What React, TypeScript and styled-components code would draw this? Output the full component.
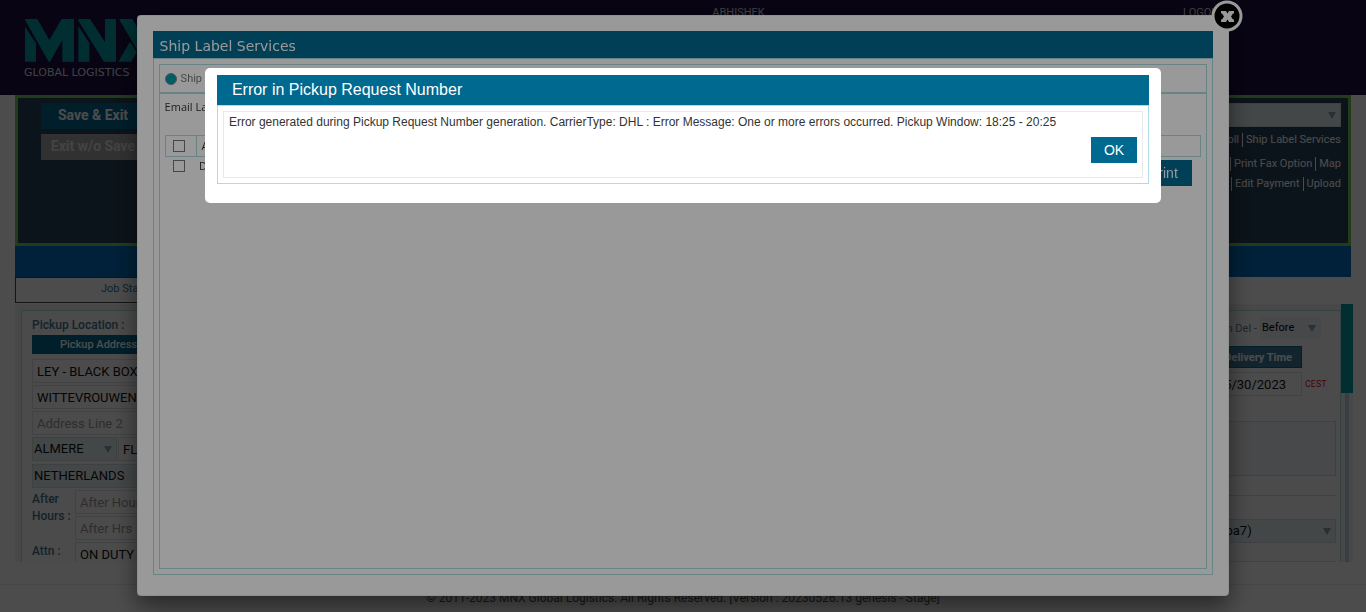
import React from "react";
import styled, { createGlobalStyle } from "styled-components";

const teal = "#006990";
const rule = "#aedce2";

const GlobalStyle = createGlobalStyle`
  *, *::before, *::after { box-sizing: border-box; }
  body { margin: 0; background: #fff; font-family: Roboto, sans-serif; font-size: 13px; color: #111; }
  button, input, select, textarea { font: inherit; color: inherit; margin: 0; border-radius: 0; }
  a { color: inherit; text-decoration: none; }
`;

const Page = styled.div`
  height: 100vh;
  overflow: hidden;
  display: flex;
  flex-direction: column;
  background: #fdfdfd;
`;

const Header = styled.header`
  flex: none;
  height: 95px;
  display: grid;
  grid-template-columns: 1fr auto 1fr;
  padding: 6px 141px 0 24px;
  background: #1c0f41;
  color: #d8d8d8;
  font-size: 11px;
  line-height: 14px;
`;

const Brand = styled.a`
  display: flex;
  flex-direction: column;
  gap: 5px;
  padding-top: 13px;
  font: 11px/12px "DejaVu Sans", sans-serif;
  svg { display: block; }
`;

const UserName = styled.span`
  padding-left: 228px;
`;

const LogOff = styled.a`
  justify-self: end;
`;

const Main = styled.main`
  flex: 1;
  min-height: 0;
  display: flex;
  flex-direction: column;
  margin: 0 15px;
`;

const ActionPanel = styled.section`
  flex: none;
  height: 151px;
  display: flex;
  justify-content: space-between;
  padding: 5px 7px 0 23px;
  border: 3px solid #73c85d;
  background: #28435a;
`;

const ActionList = styled.div`
  display: flex;
  flex-direction: column;
  gap: 5px;
  width: 104px;
`;

const ActionButton = styled.button<{ $muted?: boolean }>`
  height: 26px;
  padding: 0 0 2px;
  border: 0;
  background: ${(p) => (p.$muted ? "#a6a6a6" : teal)};
  color: ${(p) => (p.$muted ? "#e0e0e0" : "#fff")};
  font-size: 14px;
  font-weight: 700;
  white-space: nowrap;
`;

const LinkArea = styled.nav`
  width: 260px;
  color: #fff;
  font-size: 11px;
  line-height: 14px;
`;

const LinkRow = styled.div<{ $gap: number }>`
  display: flex;
  justify-content: flex-end;
  margin-top: ${(p) => p.$gap}px;
  a + a { margin-left: 3px; padding-left: 3px; border-left: 1px solid #fff; }
`;

const BlueBar = styled.div`
  flex: none;
  height: 31px;
  background: #006ebf;
`;

const JobRow = styled.div`
  flex: none;
  width: 600px;
  height: 26px;
  padding-left: 85px;
  border: 1px solid #444;
  color: #3b7191;
  font-size: 11px;
  line-height: 21px;
`;

const ScrollArea = styled.div`
  flex: none;
  height: 258px;
  display: flex;
  margin: 1px -2px 0 0;
  overflow: hidden;
  background: #f0f0f0;
`;

const FormPanel = styled.section`
  flex: 1;
  height: 400px;
  display: flex;
  justify-content: space-between;
  margin: 6px 0 0 6px;
  padding: 6px 4px 0 10px;
  border: 1px solid ${rule};
  background: #fbfbfb;
`;

const ScrollTrack = styled.div`
  width: 12px;
  display: flex;
  flex-direction: column;
  align-items: center;
`;

const Thumb = styled.div`
  width: 12px;
  height: 89px;
  background: #009ca6;
`;

const Track = styled.div`
  flex: 1;
  width: 4px;
  background: #b4d6e0;
`;

const Column = styled.div<{ $w: number }>`
  display: flex;
  flex-direction: column;
  gap: 2px;
  width: ${(p) => p.$w}px;
`;

const FieldLabel = styled.label`
  color: #44748f;
  font-size: 12px;
  font-weight: 500;
  line-height: 16px;
`;

const Line = styled.div`
  display: flex;
  align-items: flex-start;
  gap: 1px;
`;

const CityLine = styled(Line)`
  padding-bottom: 1px;
`;

const BarButton = styled.button`
  height: 19px;
  margin-bottom: 3px;
  padding: 0 0 0 28px;
  border: 0;
  background: ${teal};
  color: #fff;
  font-size: 11px;
  font-weight: 500;
  text-align: left;
`;

const TextField = styled.input`
  width: 100%;
  min-width: 0;
  height: 24px;
  padding: 0 4px;
  border: 1px solid #d8dde2;
  background: #fafafb;
  &::placeholder { color: #999; opacity: 1; }
`;

const SelectBox = styled.span<{ $w?: string; $h?: number; $bg?: string }>`
  display: grid;
  align-items: center;
  width: ${(p) => p.$w ?? "100%"};
  height: ${(p) => p.$h ?? 24}px;
  border: 1px solid ${(p) => p.$bg ?? "#d0d8dc"};
  background: ${(p) => p.$bg ?? "#e2edef"};
  select, svg { grid-area: 1 / 1; }
  select { width: 100%; height: 100%; padding: 0 1px 1px; border: 0; background: none; appearance: none; }
  svg { justify-self: end; margin-right: 4px; pointer-events: none; }
`;

const SideLabel = styled(FieldLabel)`
  flex: none;
  width: 42px;
  line-height: 17px;
  padding-top: 1px;
`;

const Stack = styled.div`
  flex: 1;
  display: flex;
  flex-direction: column;
  gap: 2px;
`;

const DeliveryColumn = styled.div`
  width: 117px;
  font-size: 13px;
`;

const WhenLine = styled.div`
  display: flex;
  align-items: center;
  gap: 5px;
  color: #5b86a0;
  font-size: 11px;
  label { width: 36px; text-align: right; white-space: nowrap; }
  select { color: #000; }
`;

const DeliveryButton = styled.button`
  display: block;
  width: 83px;
  height: 22px;
  margin: 7px 0 4px;
  padding: 0 9px 0 0;
  border: 1px solid ${teal};
  background: #3f7c9c;
  color: #fff;
  font-size: 11px;
  font-weight: 700;
  text-align: right;
  white-space: nowrap;
`;

const DateLine = styled.div`
  display: flex;
  align-items: center;
  gap: 3px;
  small { color: #f01414; font-size: 9px; }
  input { width: 83px; padding: 0 15px 0 0; text-align: right; }
`;

const Notes = styled.textarea`
  display: block;
  width: 100%;
  height: 55px;
  margin: 25px 0 19px;
  border: 1px solid #d0d8dc;
  background: #f2f4f8;
  resize: none;
`;

const Divider = styled.hr`
  margin: 0;
  border: 0;
  border-top: 1px solid #d8dde0;
`;

const Gap = styled.div`
  padding: 23px 0 18px;
`;

const Footer = styled.footer`
  flex: none;
  height: 28px;
  padding-top: 5px;
  border-top: 1px solid #ececec;
  color: #555;
  font-size: 12px;
  line-height: 16px;
  text-align: center;
`;

const Shade = styled.div<{ $level: number }>`
  position: fixed;
  inset: 0;
  background: rgba(0, 0, 0, ${(p) => p.$level});
`;

const LabelDialog = styled.div`
  position: fixed;
  top: 15px;
  bottom: 16px;
  left: 10%;
  width: 80%;
  display: flex;
  flex-direction: column;
  padding: 16px;
  border-radius: 4px;
  background: #fff;
  box-shadow: 0 10px 25px rgba(0, 0, 0, 0.5), inset 0 0 1px #555;
`;

const DialogTitle = styled.h2`
  flex: none;
  margin: 0;
  height: 27px;
  padding: 0 7px;
  background: ${teal};
  color: #fff;
  font: 400 14px/30px "DejaVu Sans", sans-serif;
`;

const Frame = styled.div`
  flex: 1;
  display: flex;
  margin-bottom: 5px;
  padding: 5px;
  border: 1px solid ${rule};
`;

const FrameInner = styled.div`
  flex: 1;
  border: 1px solid ${rule};
  color: #333;
  font: 11px/16px "Open Sans", sans-serif;
`;

const RadioLine = styled.label`
  display: flex;
  align-items: center;
  gap: 4px;
  height: 29px;
  padding-left: 5px;
  border-bottom: 2px solid ${rule};
  color: #777;
  font-family: Roboto, sans-serif;
  input { appearance: none; width: 12px; height: 12px; margin: 0; border: 1px solid #88a; border-radius: 50%; background: #009ca6; }
`;

const EmailLine = styled.p`
  margin: 0;
  padding: 5px;
  height: 41px;
`;

const LabelTable = styled.table`
  width: calc(100% - 10px);
  margin-left: 5px;
  border-collapse: collapse;
  th, td { height: 18px; padding: 0 5px; font-weight: 400; text-align: left; }
  th { height: 21px; border: 1px solid ${rule}; }
  td + td { padding-left: 3px; }
  th:first-child { width: 31px; padding: 0 7px; }
  td:first-child { padding: 0 8px; }
`;

const Tick = styled.input`
  appearance: none;
  display: block;
  width: 12px;
  height: 12px;
  border: 1px solid #777;
  background: #fff;
`;

const SolidButton = styled.button<{ $w: number }>`
  display: block;
  width: ${(p) => p.$w}px;
  height: 26px;
  padding: 0;
  border: 0;
  background: ${teal};
  color: #fff;
  font: 14px "Liberation Sans", sans-serif;
`;

const PrintLine = styled.div`
  display: flex;
  justify-content: flex-end;
  margin: -15px 14px 0 0;
`;

const CloseButton = styled.button`
  position: absolute;
  top: -15px;
  right: -14px;
  width: 32px;
  height: 32px;
  padding: 0;
  border: 0;
  background: none;
  svg { display: block; }
`;

const ErrorDialog = styled.div`
  position: fixed;
  top: 68px;
  left: 15%;
  width: 70%;
  padding: 7px 12px 19px;
  border-radius: 5px;
  background: #fff;
  font-family: "Liberation Sans", sans-serif;
`;

const ErrorTitle = styled.h2`
  margin: 0;
  padding: 0 15px;
  background: ${teal};
  color: #fff;
  font-size: 16px;
  font-weight: 400;
  line-height: 30px;
`;

const ErrorFrame = styled.div`
  padding: 5px;
  border: 1px solid ${rule};
`;

const ErrorBody = styled.div`
  display: flex;
  flex-direction: column;
  padding: 3px 5px 14px;
  border: 1px solid #eaeaea;
  color: #333;
  font-size: 12px;
  line-height: 15px;
  p { margin: 0 0 7px; }
  button { align-self: flex-end; }
`;

const Arrow = () => (
  <svg width="8" height="7" viewBox="0 0 8 7" aria-hidden="true">
    <path d="M0 0h8L4 7z" fill="#8c9fb2" />
  </svg>
);

const Choice = ({ label, value, w, h, bg }: { label: string; value: string; w?: string; h?: number; bg?: string }) => (
  <SelectBox $w={w} $h={h} $bg={bg}>
    <select aria-label={label} defaultValue={value}>
      <option>{value}</option>
    </select>
    <Arrow />
  </SelectBox>
);

export default function App() {
  return (
    <>
      <GlobalStyle />
      <Page>
        <Header>
          <Brand href="#">
            <svg width="128" height="43" viewBox="0 0 384 129" aria-label="MNX" fill="#009ca6">
              <path d="M3 23 36 73V128H3z" />
              <path d="M3 0H40L76 63 113 0H150V128H115V63L78 128H74L3 3z" />
              <path d="M163 21 196 73V128H163z" />
              <path d="M163 0H198L243 70V0H276V128H240L163 5z" />
              <path d="M285 0H325L384 100V128H360z" />
              <path d="M283 128 318 68 338 100 322 128z" />
            </svg>
            GLOBAL LOGISTICS
          </Brand>
          <UserName>ABHISHEK</UserName>
          <LogOff href="#">LOGOUT</LogOff>
        </Header>
        <Main>
          <ActionPanel>
            <ActionList>
              <ActionButton>Save &amp; Exit</ActionButton>
              <ActionButton $muted>Exit w/o Save</ActionButton>
            </ActionList>
            <LinkArea>
              <Choice label="Shortcut" value="" />
              <LinkRow $gap={6}><a href="#">Poll</a><a href="#">Ship Label Services</a></LinkRow>
              <LinkRow $gap={10}><a href="#">Fax</a><a href="#">Print Fax Option</a><a href="#">Map</a></LinkRow>
              <LinkRow $gap={6}><a href="#">Edit</a><a href="#">Edit Payment</a><a href="#">Upload</a></LinkRow>
            </LinkArea>
          </ActionPanel>
          <BlueBar />
          <JobRow>Job Status</JobRow>
          <ScrollArea>
            <FormPanel>
              <Column $w={180}>
                <FieldLabel htmlFor="pickup">Pickup Location :</FieldLabel>
                <BarButton>Pickup Address</BarButton>
                <TextField id="pickup" defaultValue="LEY - BLACK BOX" />
                <TextField aria-label="Street" defaultValue="WITTEVROUWEN" />
                <TextField aria-label="Address Line 2" placeholder="Address Line 2" />
                <CityLine>
                  <Choice label="City" value="ALMERE" w="85px" />
                  <Stack><TextField aria-label="State" defaultValue="FL" /></Stack>
                </CityLine>
                <Choice label="Country" value="NETHERLANDS" />
                <Line>
                  <SideLabel htmlFor="hours">After Hours :</SideLabel>
                  <Stack>
                    <TextField id="hours" placeholder="After Hours" />
                    <TextField aria-label="After Hrs" placeholder="After Hrs" />
                  </Stack>
                </Line>
                <Line>
                  <SideLabel htmlFor="attn">Attn :</SideLabel>
                  <Stack><TextField id="attn" defaultValue="ON DUTY" /></Stack>
                </Line>
              </Column>
              <DeliveryColumn>
                <WhenLine>
                  <label htmlFor="date">On Del -</label>
                  <Choice label="Delivery window" value="Before" w="61px" h={22} bg="#eaf0f6" />
                </WhenLine>
                <DeliveryButton>Delivery Time</DeliveryButton>
                <DateLine>
                  <TextField id="date" defaultValue="5/30/2023" />
                  <small>CEST</small>
                </DateLine>
                <Notes aria-label="Notes" />
                <Divider />
                <Gap><Choice label="Vehicle" value="(pa7)" /></Gap>
                <Divider />
              </DeliveryColumn>
            </FormPanel>
            <ScrollTrack><Thumb /><Track /></ScrollTrack>
          </ScrollArea>
        </Main>
        <Footer>© 2011-2023 MNX Global Logistics. All Rights Reserved. [Version : 20230526.13 genesis - Stage]</Footer>
      </Page>

      <Shade $level={0.5} />
      <LabelDialog role="dialog" aria-label="Ship Label Services">
        <DialogTitle>Ship Label Services</DialogTitle>
        <Frame>
          <FrameInner>
            <RadioLine><input type="radio" name="mode" defaultChecked />Ship Label</RadioLine>
            <EmailLine>Email Label</EmailLine>
            <LabelTable>
              <thead>
                <tr><th><Tick type="checkbox" aria-label="Select all" /></th><th>AWB</th></tr>
              </thead>
              <tbody>
                <tr><td><Tick type="checkbox" aria-label="Select DHL" /></td><td>DHL</td></tr>
              </tbody>
            </LabelTable>
            <PrintLine><SolidButton $w={58}>Print</SolidButton></PrintLine>
          </FrameInner>
        </Frame>
        <CloseButton aria-label="Close">
          <svg width="32" height="32" viewBox="0 0 32 32">
            <circle cx="16" cy="16" r="14" fill="#000" stroke="#fff" strokeWidth="3" />
            <path d="M10 11h5l1.5 2.5L18 11h5v2.5h-1l-2 3 2 3h1V22h-5l-1.500-2.500L15 22h-5v-2.500h1l2-3-2-3h-1z" fill="#fff" />
          </svg>
        </CloseButton>
      </LabelDialog>

      <Shade $level={0.4} />
      <ErrorDialog role="alertdialog" aria-label="Error in Pickup Request Number">
        <ErrorTitle>Error in Pickup Request Number</ErrorTitle>
        <ErrorFrame>
          <ErrorBody>
            <p>Error generated during Pickup Request Number generation. CarrierType: DHL : Error Message: One or more errors occurred. Pickup Window: 18:25 - 20:25</p>
            <SolidButton $w={46}>OK</SolidButton>
          </ErrorBody>
        </ErrorFrame>
      </ErrorDialog>
    </>
  );
}
